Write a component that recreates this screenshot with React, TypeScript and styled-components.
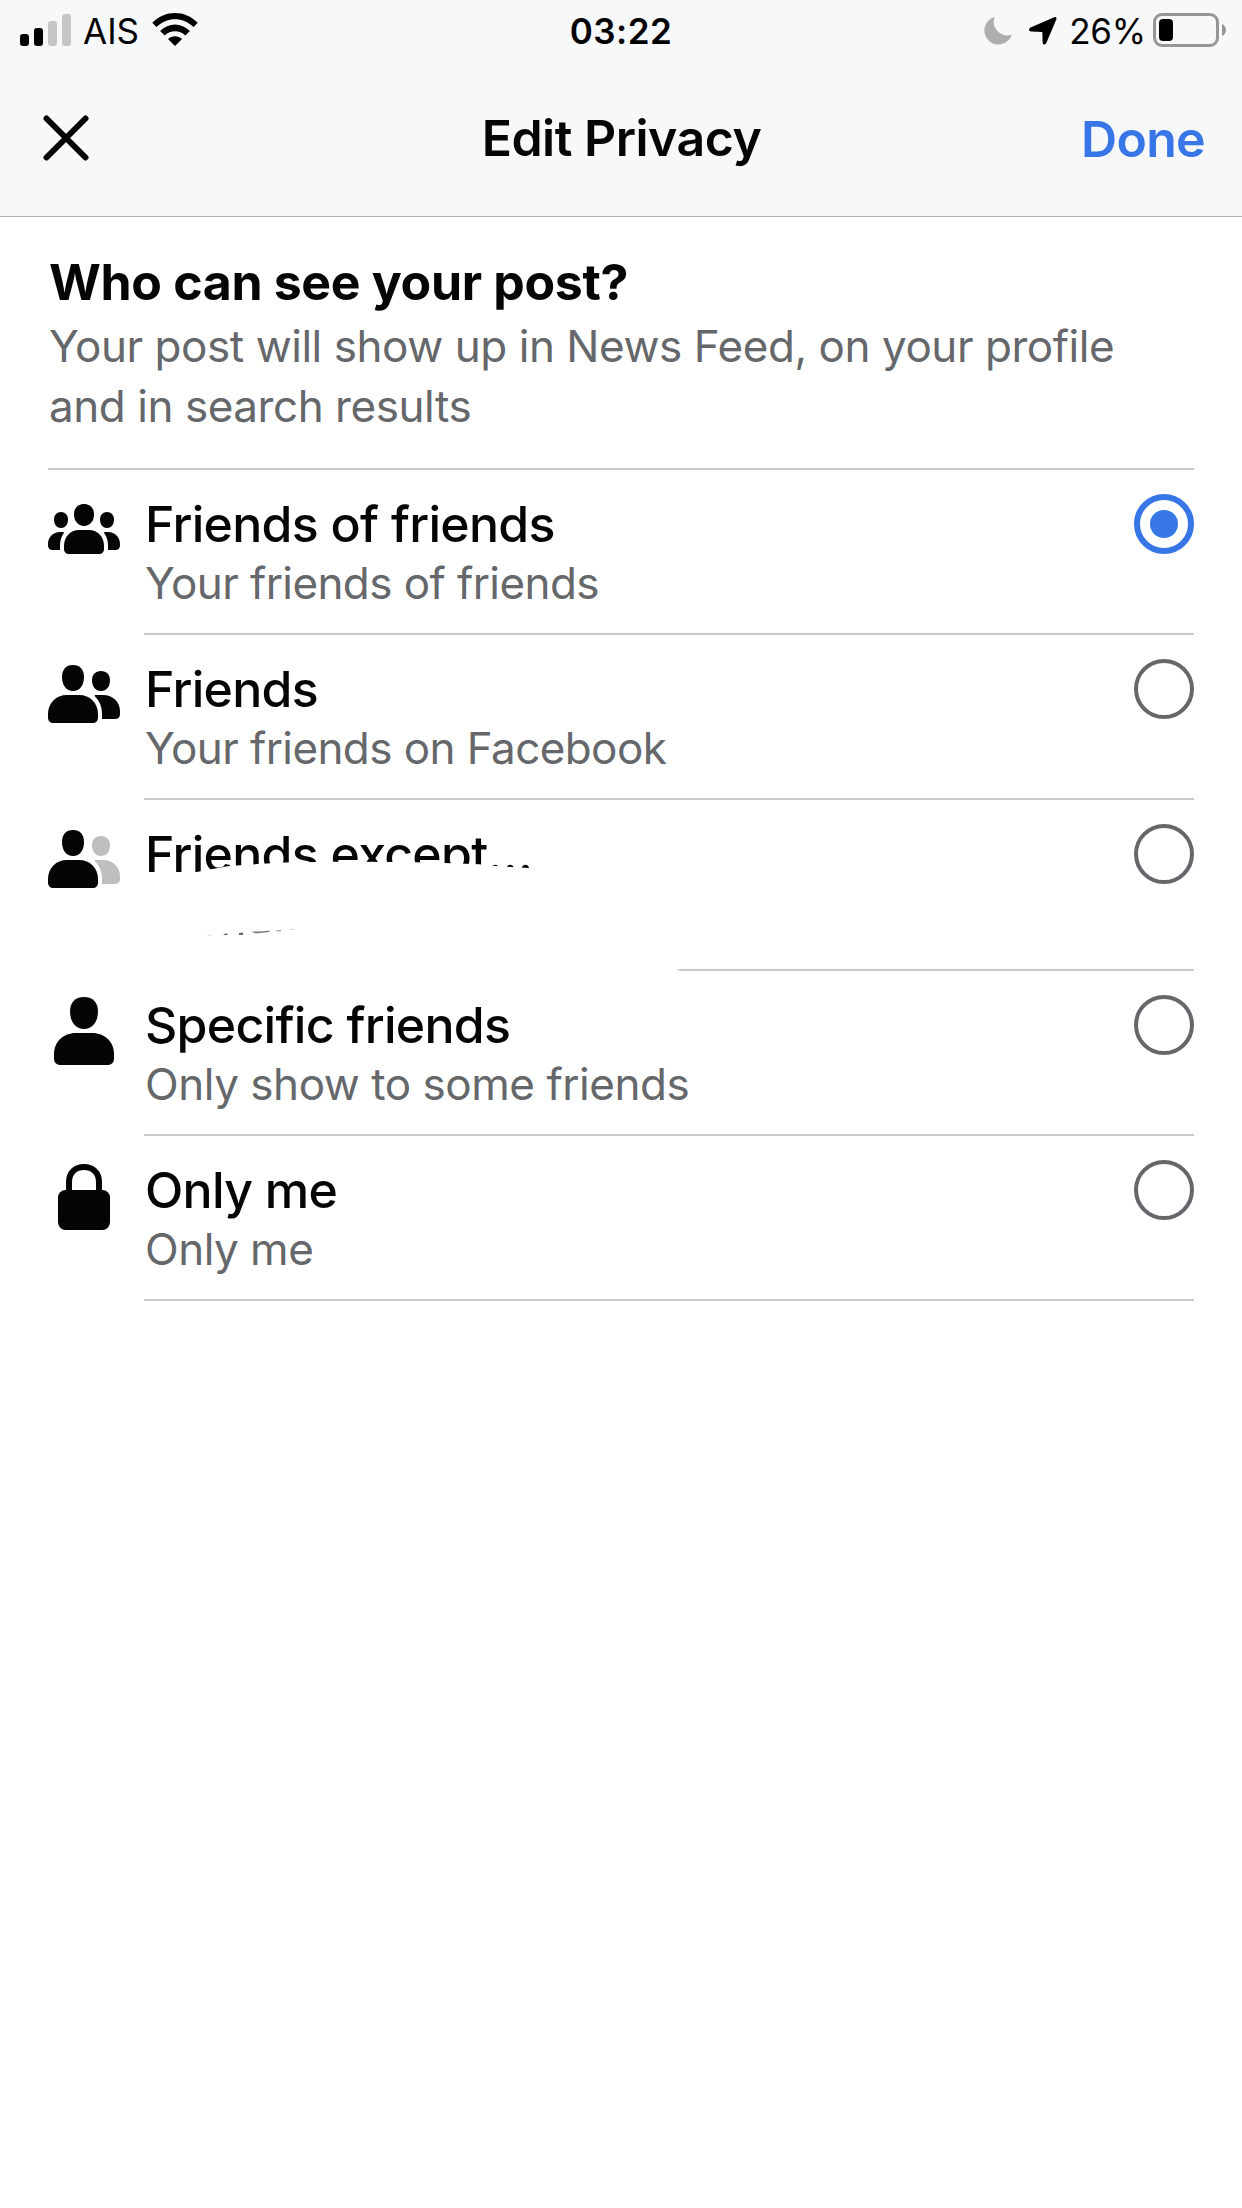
import React, { useState } from "react";
import styled, { createGlobalStyle } from "styled-components";

const GlobalStyle = createGlobalStyle`
  html, body { margin: 0; padding: 0; background: #fff; }
  * { box-sizing: border-box; }
`;

const ink = "#050505";
const muted = "#65676b";
const blue = "#3876e8";

const Screen = styled.div`
  width: 1242px;
  height: 2208px;
  overflow: hidden;
  background: #fff;
  font-family: Inter, "Liberation Sans", sans-serif;
  color: ${ink};
`;

const Header = styled.header`
  height: 217px;
  background: #f7f8fa;
  border-bottom: 1px solid #b0b1b3;
`;

const StatusBar = styled.div`
  display: grid;
  grid-template-columns: 1fr auto 1fr;
  align-items: center;
  height: 60px;
  padding: 0 16px;
  color: #000;
`;

const StatusGroup = styled.div<{ $end?: boolean }>`
  display: flex;
  align-items: center;
  height: 60px;
  padding-left: ${(p) => (p.$end ? "0" : "4px")};
  justify-content: ${(p) => (p.$end ? "flex-end" : "flex-start")};
`;

const Glyph = styled.span<{ $gap?: number }>`
  display: flex;
  padding-top: 2px;
  margin-right: ${(p) => p.$gap ?? 0}px;
`;

const StatusText = styled.span<{ $weight?: number; $spacing?: string; $margin?: string }>`
  font-size: 35px;
  line-height: 57px;
  padding-top: 3px;
  white-space: nowrap;
  font-weight: ${(p) => p.$weight ?? 400};
  letter-spacing: ${(p) => p.$spacing ?? "0"};
  margin: ${(p) => p.$margin ?? "0"};
`;

const NavBar = styled.div`
  display: grid;
  grid-template-columns: 1fr auto 1fr;
  align-items: center;
  height: 156px;
  padding: 0 37px;
`;

const CloseButton = styled.button`
  display: flex;
  width: 46px;
  height: 46px;
  margin-left: 6px;
  padding: 0;
  border: 0;
  background: none;
`;

const Title = styled.h1`
  margin: 0;
  padding-left: 1px;
  font-size: 50px;
  line-height: 60px;
  font-weight: 600;
  letter-spacing: -0.5px;
`;

const DoneButton = styled.button`
  justify-self: end;
  padding: 2px 0 0;
  border: 0;
  background: none;
  font: 600 50px/60px Inter, "Liberation Sans", sans-serif;
  letter-spacing: -0.7px;
  color: ${blue};
`;

const Content = styled.main`
  padding: 0 48px;
`;

const Intro = styled.section`
  height: 253px;
  padding-top: 35px;
  border-bottom: 2px solid #c9cacf;
`;

const Question = styled.h2`
  margin: 0;
  padding-left: 1px;
  font-size: 50px;
  line-height: 60px;
  font-weight: 700;
  letter-spacing: -0.34px;
`;

const Explanation = styled.p`
  margin: 4px 0 0;
  padding-left: 1px;
  font-size: 44px;
  line-height: 60px;
  letter-spacing: -0.45px;
  color: ${muted};
`;

const Row = styled.div<{ $height: number }>`
  position: relative;
  display: grid;
  grid-template-columns: 96px 1fr;
  height: ${(p) => p.$height}px;
`;

const RowIcon = styled.div`
  padding-top: 18px;
`;

const RowBody = styled.div`
  display: flex;
  justify-content: space-between;
  border-bottom: 2px solid #c9cacf;
`;

const RowText = styled.div`
  padding: 24px 0 0 1px;
`;

const RowTitle = styled.div`
  font-size: 50px;
  line-height: 60px;
  font-weight: 500;
  letter-spacing: -0.72px;
  white-space: nowrap;
`;

const RowSubtitle = styled.div<{ $spacing: string }>`
  margin-top: -1px;
  font-size: 44px;
  line-height: 60px;
  letter-spacing: ${(p) => p.$spacing};
  color: ${muted};
  white-space: nowrap;
`;

const Radio = styled.button<{ $on: boolean }>`
  display: grid;
  place-items: center;
  width: 60px;
  height: 60px;
  margin-top: 24px;
  padding: 0;
  border: ${(p) => (p.$on ? `6px solid ${blue}` : `4px solid ${muted}`)};
  border-radius: 50%;
  background: #fff;
`;

const RadioDot = styled.span`
  width: 28px;
  height: 28px;
  border-radius: 50%;
  background: ${blue};
`;

const Redaction = styled.svg`
  position: absolute;
  left: 96px;
  top: 0;
`;

const Signal = () => (
  <svg width="51" height="32" viewBox="0 0 51 32">
    <rect x="0" y="20" width="9" height="12" rx="3" />
    <rect x="14" y="14" width="9" height="18" rx="3" />
    <rect x="28" y="7" width="9" height="25" rx="3" fill="#c5c6c8" />
    <rect x="42" y="0" width="9" height="32" rx="3" fill="#c5c6c8" />
  </svg>
);

const Wifi = () => (
  <svg width="46" height="34" viewBox="0 0 46 34">
    <path d="M0.3 9.8C13.2-3.2 32.8-3.2 45.7 9.8L41.6 14C30.7 3.6 15.3 3.6 4.4 14Z" />
    <path d="M8.1 18C16.7 9.3 29.3 9.3 37.9 18L33.3 22.5C27.4 16.9 18.6 16.9 12.7 22.5Z" />
    <path d="M16 26C20.1 22.2 25.9 22.2 30 26L23 33Z" />
  </svg>
);

const Moon = () => (
  <svg width="28" height="28" viewBox="0 0 28 28">
    <path d="M10.8 0A14 14 0 1 0 27.8 17.4A13.3 13.3 0 0 1 10.8 0Z" fill="#adaeb0" />
  </svg>
);

const Arrow = () => (
  <svg width="28" height="28" viewBox="0 0 28 28">
    <path d="M25.2 0.2C26.8-0.3 28 0.9 27.3 2.6L17.4 25.8C16.4 28.1 13.7 27.9 13.6 25.4L13.3 14.9L2 14.4C-0.4 14.2-0.7 11.4 1.6 10.4Z" />
  </svg>
);

const Battery = () => (
  <svg width="73" height="34" viewBox="0 0 73 34">
    <rect x="1.5" y="1.5" width="63" height="31" rx="7.5" fill="none" stroke="#959698" strokeWidth="3" />
    <rect x="6" y="6" width="14" height="22" rx="4" />
    <path d="M69 11C74.3 13 74.3 21 69 23Z" fill="#959698" />
  </svg>
);

const Cross = () => (
  <svg width="46" height="46" viewBox="0 0 46 46">
    <path d="M3.5 3.5L42.5 42.5M42.5 3.5L3.5 42.5" stroke={ink} strokeWidth="6" strokeLinecap="round" />
  </svg>
);

const GroupIcon = () => (
  <svg width="72" height="80" viewBox="0 0 72 80" fill={ink}>
    <path d="M36 16C42 16 46 20 46 26.3C46 33 42 38 36 38S26 33 26 26.3C26 20 30 16 36 16Z" />
    <path d="M13 24C17 24 20 27 20 31.5C20 36.5 17 40 13 40S6 36.5 6 31.5C6 27 9 24 13 24Z" />
    <path d="M59 24C63 24 66 27 66 31.5C66 36.5 63 40 59 40S52 36.5 52 31.5C52 27 55 24 59 24Z" />
    <path d="M31 42H41C50 42 56 49 56 58V61C56 64 54 66 51 66H21C18 66 16 64 16 61V58C16 49 22 42 31 42Z" />
    <path d="M12 44H15.2C16 44 16.2 44.7 15.7 45.2C13 49 12 53 12 58V62H4.5C1.8 62 0 60.2 0 57.5V56C0 49 5 44 12 44Z" />
    <path d="M60 44H56.8C56 44 55.8 44.7 56.3 45.2C59 49 60 53 60 58V62H67.5C70.2 62 72 60.2 72 57.5V56C72 49 67 44 60 44Z" />
  </svg>
);

const PairIcon = ({ second = ink }: { second?: string }) => (
  <svg width="72" height="80" viewBox="0 0 72 80" fill={ink}>
    <path d="M25 12C32 12 36 16.5 36 24C36 32 32 38 25 38S14 32 14 24C14 16.5 18 12 25 12Z" />
    <path d="M19 42H31C42 42 50 50 50 61V64.5C50 68 48 70 44.5 70H5.5C2 70 0 68 0 64.5V61C0 50 8 42 19 42Z" />
    <path fill={second} d="M53 18C58.5 18 62 21.7 62 27.2C62 33.5 58.5 38 53 38S44 33.5 44 27.2C44 21.7 47.5 18 53 18Z" />
    <path fill={second} d="M47.7 42H55C65 42 72 49 72 58V61C72 64.2 70.2 66 67 66H54V61C54 54 51.8 48.5 47.3 43.7C46.2 42.7 46.5 42 47.7 42Z" />
  </svg>
);

const PersonIcon = () => (
  <svg width="72" height="80" viewBox="0 0 72 80" fill={ink}>
    <path d="M36 8C45 8 50 13.5 50 22.5C50 32 45 40 36 40S22 32 22 22.5C22 13.5 27 8 36 8Z" />
    <path d="M28 44H44C57 44 66 53 66 65V69.5C66 73.5 63.5 76 59.5 76H12.5C8.5 76 6 73.5 6 69.5V65C6 53 15 44 28 44Z" />
  </svg>
);

const LockIcon = () => (
  <svg width="72" height="80" viewBox="0 0 72 80" fill={ink}>
    <path d="M21 40V28C21 19 27 13 36 13S51 19 51 28V40" fill="none" stroke={ink} strokeWidth="6" />
    <rect x="10" y="36" width="52" height="40" rx="7.5" />
  </svg>
);

type Option = {
  id: string;
  title: string;
  subtitle?: string;
  icon: React.ReactNode;
  height: number;
  spacing?: string;
};

const options: Option[] = [
  { id: "fof", title: "Friends of friends", subtitle: "Your friends of friends", icon: <GroupIcon />, height: 165 },
  { id: "friends", title: "Friends", subtitle: "Your friends on Facebook", icon: <PairIcon />, height: 165 },
  { id: "except", title: "Friends except…", icon: <PairIcon second="#bfbfbf" />, height: 171 },
  { id: "specific", title: "Specific friends", subtitle: "Only show to some friends", icon: <PersonIcon />, height: 165, spacing: "-0.46px" },
  { id: "me", title: "Only me", subtitle: "Only me", icon: <LockIcon />, height: 165, spacing: "-0.5px" },
];

export default function App() {
  const [selected, setSelected] = useState("fof");
  return (
    <Screen>
      <GlobalStyle />
      <Header>
        <StatusBar>
          <StatusGroup>
            <Signal />
            <StatusText $margin="0 13px 0 12px">AIS</StatusText>
            <Wifi />
          </StatusGroup>
          <StatusText $weight={600} $spacing="0.5px">03:22</StatusText>
          <StatusGroup $end>
            <Glyph $gap={17}><Moon /></Glyph>
            <Glyph $gap={12}><Arrow /></Glyph>
            <StatusText $spacing="-0.2px" $margin="0 7px 0 0">26%</StatusText>
            <Battery />
          </StatusGroup>
        </StatusBar>
        <NavBar>
          <CloseButton aria-label="Close"><Cross /></CloseButton>
          <Title>Edit Privacy</Title>
          <DoneButton>Done</DoneButton>
        </NavBar>
      </Header>
      <Content>
        <Intro>
          <Question>Who can see your post?</Question>
          <Explanation>
            Your post will show up in News Feed, on your profile<br />and in search results
          </Explanation>
        </Intro>
        {options.map((o) => (
          <Row key={o.id} $height={o.height}>
            <RowIcon>{o.icon}</RowIcon>
            <RowBody>
              <RowText>
                <RowTitle>{o.title}</RowTitle>
                {o.subtitle && <RowSubtitle $spacing={o.spacing ?? "-0.58px"}>{o.subtitle}</RowSubtitle>}
              </RowText>
              <Radio $on={selected === o.id} onClick={() => setSelected(o.id)} aria-label={o.title}>
                {selected === o.id && <RadioDot />}
              </Radio>
            </RowBody>
            {o.id === "except" && (
              <Redaction width="560" height="171" viewBox="0 0 560 171">
                <path fill="#fff" d="M0 76L50 72.5L66 69.5L85 66L114 64L140 62.5L190 61.7L260 62L300 63L335 64.3L354 66.2L368 67L384 68L430 76L530 168L536 171H0Z" />
                <g fill={muted}>
                  <path d="M62 135.5L67 134.6V135.5Z" opacity="0.4" />
                  <path d="M79.5 134L83.5 133.3V135H80Z" />
                  <path d="M95 133L99 132.5V135H95Z" />
                  <path d="M107 131.6L119 131.2L125.5 130.6V132L112 133.4Z" opacity="0.85" />
                  <path d="M132 130.5L137 130V131.2L132.5 131.5Z" opacity="0.7" />
                  <path d="M145.5 129.4L150 129V130H145.5Z" opacity="0.35" />
                </g>
              </Redaction>
            )}
          </Row>
        ))}
      </Content>
    </Screen>
  );
}
